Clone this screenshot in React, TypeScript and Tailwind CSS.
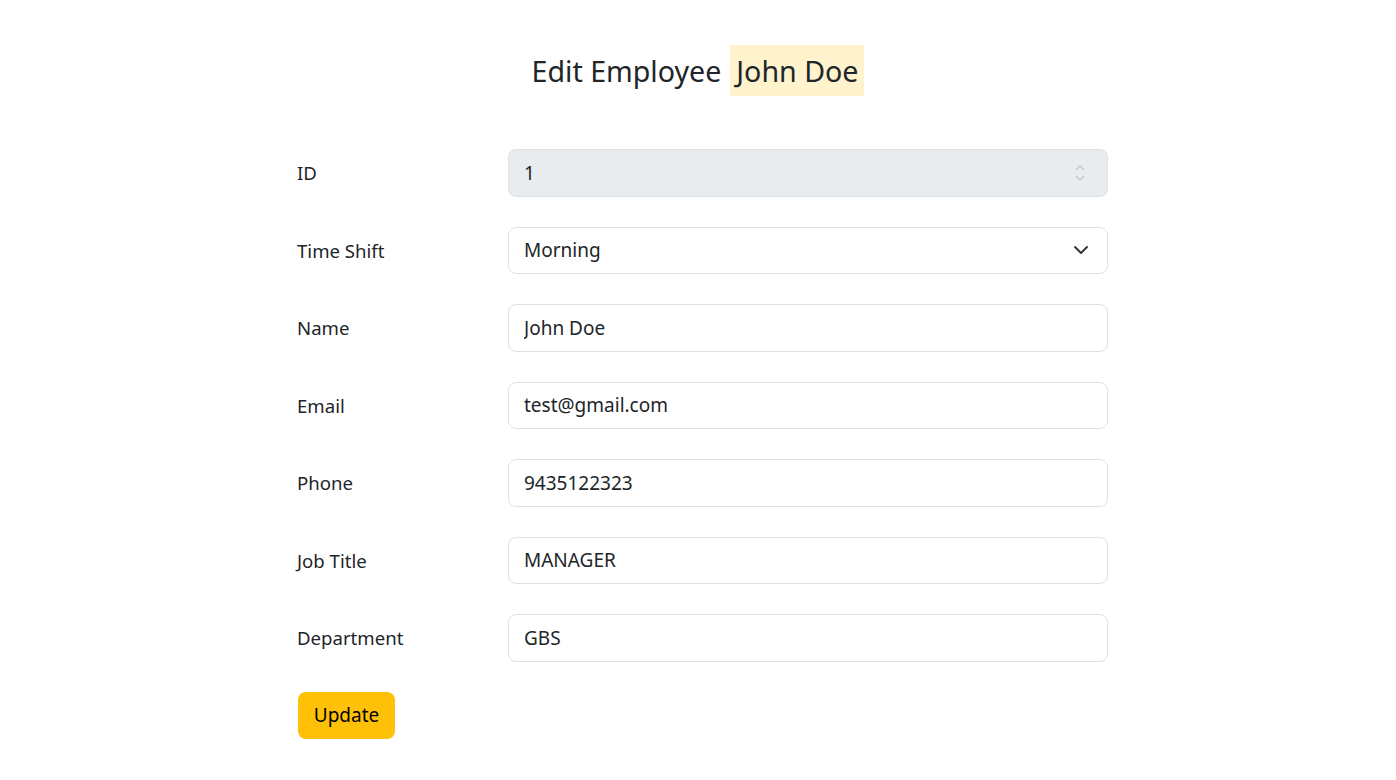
import React, { useState } from 'react'

const font = { fontFamily: '"Noto Sans", "Open Sans", sans-serif' }

function Field({ label, children }: { label: string; children: React.ReactNode }) {
  return (
    <div className="flex items-center">
      <label className="w-[211px] pt-[1px] text-[18.6px] text-[#212529]">{label}</label>
      {children}
    </div>
  )
}

function TextInput({ value }: { value: string }) {
  const [val, setVal] = useState(value)
  return (
    <input
      value={val}
      onChange={e => setVal(e.target.value)}
      className="w-[600px] h-[47.5px] rounded-lg border border-[#dee2e6] bg-white px-[15px] text-[19px] text-[#212529] outline-none"
    />
  )
}

export default function App() {
  return (
    <div className="min-h-screen bg-white pt-[45px]" style={font}>
      <div className="flex justify-center">
        <h2 className="text-[28.6px] leading-[38px] text-[#212529] flex items-center">
          <span>Edit Employee</span>
          <span className="ml-[9px] bg-[#fff3cd] px-[6px] py-[6.5px]">John Doe</span>
        </h2>
      </div>

      <form className="w-[1140px] mx-auto pl-[169px] mt-[53px] flex flex-col gap-[30px]" onSubmit={e => e.preventDefault()}>
        <Field label="ID">
          <div className="w-[600px] h-[47.5px] rounded-lg border border-[#dee2e6] bg-[#e9ecef] px-[15px] flex items-center justify-between text-[19px] text-[#212529]">
            <span>1</span>
            <svg width="12" height="20" viewBox="0 0 12 20" className="mr-[6px]">
              <path d="M2.5 6.5 L6 3 L9.5 6.5" fill="none" stroke="#bfc3c7" strokeWidth="1.3" strokeLinecap="round" strokeLinejoin="round" />
              <path d="M2.5 13.5 L6 17 L9.5 13.5" fill="none" stroke="#bfc3c7" strokeWidth="1.3" strokeLinecap="round" strokeLinejoin="round" />
            </svg>
          </div>
        </Field>
        <Field label="Time Shift">
          <div className="w-[600px] h-[47.5px] rounded-lg border border-[#dee2e6] bg-white px-[15px] flex items-center justify-between text-[19px] text-[#212529]">
            <span>Morning</span>
            <svg width="16" height="16" viewBox="0 0 16 16" className="mr-[3px]">
              <path d="M2 5 L8 11 L14 5" fill="none" stroke="#343a40" strokeWidth="2" strokeLinecap="round" strokeLinejoin="round" />
            </svg>
          </div>
        </Field>
        <Field label="Name"><TextInput value="John Doe" /></Field>
        <Field label="Email"><TextInput value="test@gmail.com" /></Field>
        <Field label="Phone"><TextInput value="9435122323" /></Field>
        <Field label="Job Title"><TextInput value="MANAGER" /></Field>
        <Field label="Department"><TextInput value="GBS" /></Field>
        <div>
          <button type="submit" className="ml-[1px] h-[47px] w-[97px] rounded-lg bg-[#ffc107] text-[19px] text-black">
            Update
          </button>
        </div>
      </form>
    </div>
  )
}
